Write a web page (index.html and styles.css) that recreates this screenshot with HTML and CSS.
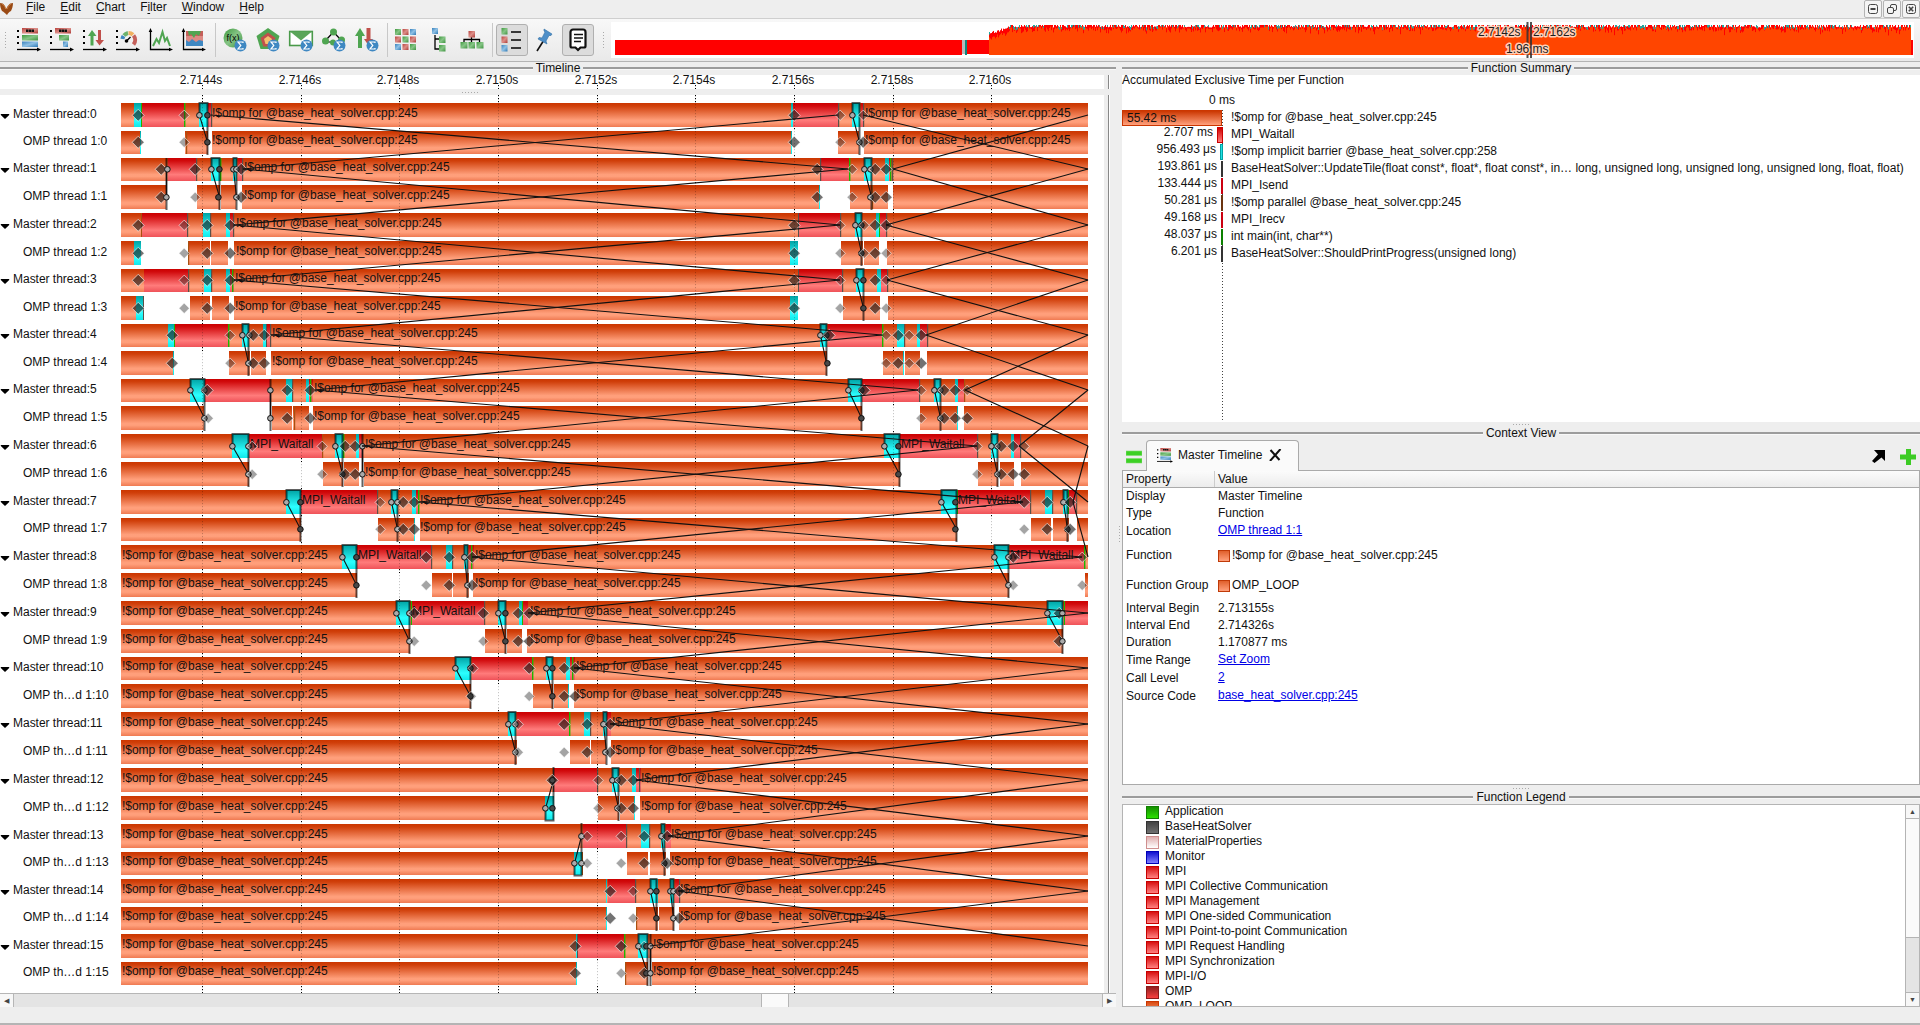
FILE: index.html
```html
<!DOCTYPE html>
<html lang="en">
<head>
<meta charset="utf-8">
<title>Trace View</title>
<link rel="stylesheet" href="styles.css">
</head>
<body>
<svg class="defs" width="0" height="0" aria-hidden="true">
  <defs>
    <linearGradient id="gOrange" x1="0" y1="0" x2="0" y2="1"><stop offset="0" stop-color="#cb3600"/><stop offset=".12" stop-color="#d03f0a"/><stop offset=".72" stop-color="#ff9f7b"/><stop offset=".8" stop-color="#ff9f7b"/><stop offset="1" stop-color="#ef7a52"/></linearGradient>
    <linearGradient id="gRed" x1="0" y1="0" x2="0" y2="1"><stop offset="0" stop-color="#cb0000"/><stop offset=".12" stop-color="#d10a0c"/><stop offset=".72" stop-color="#ff7b7b"/><stop offset="1" stop-color="#ef5258"/></linearGradient>
    <linearGradient id="gCyan" x1="0" y1="0" x2="0" y2="1"><stop offset="0" stop-color="#00a2a4"/><stop offset=".7" stop-color="#2cffff"/><stop offset="1" stop-color="#10e8ea"/></linearGradient>
    <linearGradient id="iG" x1="0" y1="0" x2="1" y2="1"><stop offset="0" stop-color="#3f9a3f"/><stop offset=".5" stop-color="#86c486"/><stop offset="1" stop-color="#3f9440"/></linearGradient>
    <linearGradient id="iR" x1="0" y1="0" x2="1" y2="1"><stop offset="0" stop-color="#b9433e"/><stop offset=".5" stop-color="#dc8f89"/><stop offset="1" stop-color="#ad3a35"/></linearGradient>
    <linearGradient id="iB" x1="0" y1="0" x2="1" y2="1"><stop offset="0" stop-color="#3a83bd"/><stop offset=".5" stop-color="#8fc0e4"/><stop offset="1" stop-color="#2f7ab5"/></linearGradient>
    <g id="axis"><path d="M0 2h2v2H0zM0 8h2v2H0zM0 14h2v2H0z" fill="#000"/><path d="M0 21.5h21" stroke="#000" stroke-width="1.3"/><path d="M20 19.5l4 2-4 2z"/></g>
    <g id="corner"><path d="M1.5 3v18.5H21" stroke="#000" stroke-width="1.3" fill="none"/><path d="M-.3 4l1.8-4 1.8 4zM20 19.7l4 1.8-4 1.8z"/></g>
    <g id="sigma"><circle cx="17.5" cy="17.5" r="6" fill="#3f88c2"/><path d="M20 15v-1h-5l2.8 3.4L15 21h5v-1" fill="none" stroke="#fff" stroke-width="1.2"/></g>
    <g id="masterIcon"><use href="#axis"/><rect x="5" y="0" width="16" height="5.5" fill="url(#iR)"/><path d="M9 2.8h8" stroke="#111" stroke-width="2.6" stroke-dasharray="2.400 .4"/><rect x="5" y="7" width="16" height="5.5" fill="url(#iG)"/><rect x="5" y="13.5" width="16" height="5.5" fill="url(#iB)"/></g>
  </defs>
</svg>

<div class="app">
  <header class="menubar">
    <svg class="logo" width="18" height="17" viewBox="0 0 18 17"><path d="M0 3c4 0 5 3 6 6 2-3 3-6 7-6 0 3-1 6-2 8-2 1-3 2-4 4-2-2-3-3-5-4C1 9 0 7 0 3z" fill="#9a4a14"/><path d="M2 4c3 1 3 4 4 5M11 4c-3 1-3 4-4 5" stroke="#c98046" fill="none"/></svg>
    <nav class="menus">
      <span class="menu"><u>F</u>ile</span><span class="menu"><u>E</u>dit</span><span class="menu"><u>C</u>hart</span><span class="menu">F<u>i</u>lter</span><span class="menu"><u>W</u>indow</span><span class="menu"><u>H</u>elp</span>
    </nav>
    <div class="winbtns">
      <span class="winbtn"><svg width="12" height="12" viewBox="0 0 12 12"><rect x="1.5" y="1.5" width="9" height="9" rx="2"/><path d="M3.5 6h5" stroke-width="2"/></svg></span>
      <span class="winbtn"><svg width="12" height="12" viewBox="0 0 12 12"><rect x="4.5" y="1.5" width="6" height="6" rx="1.5"/><rect x="1.5" y="4.5" width="6" height="6" rx="1.5" fill="#f4f4f4"/></svg></span>
      <span class="winbtn"><svg width="12" height="12" viewBox="0 0 12 12"><rect x="1.5" y="1.5" width="9" height="9" rx="2"/><path d="M3.8 3.8l4.4 4.4M8.2 3.8L3.8 8.2" stroke-width="1.6"/></svg></span>
    </div>
  </header>

  <div class="toolbar">
    <span class="grip"></span>
    <span class="tool"><svg viewBox="0 0 24 24"><use href="#masterIcon"/></svg></span>
    <span class="tool"><svg viewBox="0 0 24 24"><use href="#axis"/><rect x="5" width="16" height="5.5" fill="url(#iR)"/><path d="M9 2.8h8" stroke="#111" stroke-width="2.6" stroke-dasharray="2.400 .4"/><rect x="9" y="7" width="10" height="5.5" fill="url(#iG)"/><rect x="13" y="13.5" width="5" height="5.5" fill="url(#iB)"/></svg></span>
    <span class="tool"><svg viewBox="0 0 24 24"><use href="#axis"/><path d="M9 2l4.500 6H10.500v9.500h-3V8H5z" fill="#4fa551"/><path d="M16.500 17.500L12.500 12h2.500V2h3v10h3z" fill="#c0504b"/></svg></span>
    <span class="tool"><svg viewBox="0 0 24 24"><use href="#axis"/><g fill="none" stroke-width="4"><path d="M6.500 11a7 7 0 0 1 1-3" stroke="#3f88c2"/><path d="M8 7.500a7 7 0 0 1 4-2.500" stroke="#6db36d"/><path d="M12.500 5a7 7 0 0 1 4.500 1.800" stroke="#f0b060"/><path d="M17.500 7.500a7 7 0 0 1 0 9" stroke="#c4605a"/></g><circle cx="10.500" cy="13" r="1.800"/><path d="M10.500 13l4-4" stroke="#000" stroke-width="1.300"/></svg></span>
    <span class="tool"><svg viewBox="0 0 24 24"><use href="#corner"/><path d="M4 18l3.500-7 2.500 4 3.500-11 2.500 9 2-3 3 8" fill="none" stroke="#4fa551" stroke-width="2"/></svg></span>
    <span class="tool"><svg viewBox="0 0 24 24"><use href="#corner"/><rect x="4" y="3" width="17" height="5" fill="#c4605a"/><path d="M4 8h17v6H4z" fill="#dd8a84"/><path d="M6 3h13l-2 5-3-2-2 4-3-4-2 2z" fill="#4fa551"/><path d="M4 18v-6l3 2 3-3 4 3 3-2 4 1v5z" fill="#3f88c2"/></svg></span>
    <span class="sep first"></span>
    <span class="tool"><svg viewBox="0 0 24 24"><circle cx="10" cy="10" r="9.500" fill="url(#iG)"/><text x="10" y="13" class="fx">f(x)</text><use href="#sigma"/></svg></span>
    <span class="tool"><svg viewBox="0 0 24 24"><path d="M12 0l11.500 8-4 13h-15L.5 8z" fill="#4fa551"/><path d="M12 4.500l7.500 5.500-2.800 8.500H7.300L4.500 10z" fill="#c0504b"/><path d="M12 8l4 3-1.500 5h-5L8 11z" fill="#f4c070"/><use href="#sigma"/></svg></span>
    <span class="tool"><svg viewBox="0 0 24 24"><rect x=".7" y="3.500" width="22.600" height="14" fill="#fff" stroke="#4a9a4a" stroke-width="1.600"/><path d="M1 3.500h22l-11 9z" fill="#5aa55a"/><use href="#sigma"/></svg></span>
    <span class="tool"><svg viewBox="0 0 24 24"><path d="M11.500 4L4 12M11.500 4L19 12M4 14h5" stroke="#000" stroke-width="1.200"/><circle cx="11.500" cy="4" r="3.500" fill="#4fa551"/><circle cx="3.500" cy="13" r="3.500" fill="#4fa551"/><circle cx="11" cy="14.500" r="3" fill="#4fa551"/><circle cx="19.500" cy="12" r="3.500" fill="#4fa551"/><use href="#sigma"/></svg></span>
    <span class="tool"><svg viewBox="0 0 24 24"><path d="M5 0l5 8H7v12H3V8H0z" fill="#4fa551"/><path d="M14 18l-5-7h2.500V0h4v11H18z" fill="#c0504b"/><use href="#sigma"/></svg></span>
    <span class="sep second"></span>
    <span class="tool"><svg viewBox="0 0 24 24"><g fill="url(#iG)"><rect x="1" y="1" width="6" height="6"/><rect x="8.500" y="8.500" width="6" height="6"/><rect x="1" y="8.500" width="6" height="6" fill="url(#iR)"/><rect x="8.500" y="1" width="6" height="6" fill="url(#iR)"/><rect x="16" y="1" width="6" height="6" fill="url(#iB)"/><rect x="16" y="8.500" width="6" height="6" fill="url(#iR)"/><rect x="1" y="16" width="6" height="6" fill="url(#iB)"/><rect x="8.500" y="16" width="6" height="6" fill="url(#iR)"/><rect x="16" y="16" width="6" height="6"/></g></svg></span>
    <span class="tool"><svg viewBox="0 0 24 24"><path d="M8 7v14h5M8 11h5" fill="none" stroke="#000" stroke-width="1.300"/><rect x="5" width="6" height="6" fill="url(#iB)"/><rect x="12" y="8.500" width="6.500" height="6.500" fill="url(#iG)"/><rect x="12" y="17" width="6.500" height="6.500" fill="url(#iG)"/></svg></span>
    <span class="tool"><svg viewBox="0 0 24 24"><path d="M11.500 9v5M4 14v-2.500h15.500V14" fill="none" stroke="#000" stroke-width="1.300"/><rect x="8.500" y="3" width="6.500" height="6.500" fill="url(#iR)"/><rect x=".5" y="14" width="7" height="6.500" fill="url(#iG)"/><rect x="8.500" y="14" width="6.500" height="6.500" fill="url(#iG)"/><rect x="16.500" y="14" width="7" height="6.500" fill="url(#iG)"/></svg></span>
    <span class="sep third"></span>
    <span class="tool pressed"><svg viewBox="0 0 24 24"><rect x="1.500" width="6" height="6.500" fill="url(#iG)"/><rect x="1.500" y="8.500" width="6" height="6.500" fill="url(#iR)"/><rect x="1.500" y="17" width="6" height="6.500" fill="url(#iB)"/><path d="M11 4h10M11 12h10M11 20h10" stroke="#000" stroke-width="1.600"/></svg></span>
    <span class="tool pin"><svg viewBox="0 0 24 24"><path d="M11 12L4 23" stroke="#111" stroke-width="1.600"/><path d="M11 1l8 5-1 1.500h-2L13 13l1 3-9-5 1-1.500 3 .5 3-6-1-1z" fill="#4f8fc8" stroke="#2f6ea5" stroke-width=".6"/></svg></span>
    <span class="tool pressed"><svg viewBox="0 0 24 24"><path d="M7 1.500h10a2.500 2.500 0 0 1 2.500 2.500v14a1.500 1.500 0 0 1-1.500 1.500h-3.500L12 22l-2.500-2.500H6A1.500 1.500 0 0 1 4.500 18V4A2.500 2.500 0 0 1 7 1.500z" fill="#fff" stroke="#111" stroke-width="2.200"/><path d="M8 6.500h9M8 10h9M8 13.500h7" stroke="#111" stroke-width="1.500"/></svg></span>
    <span class="grip tail"></span>
    <svg class="overview" id="overview" width="1303" height="36" viewBox="611 23 1303 36"></svg>
  </div>

  <main class="workspace">
    <section class="timeline">
      <h2 class="group-title">Timeline</h2>
      <div class="ruler-row"><svg class="ruler" id="ruler" width="1104" height="14" viewBox="0 75 1104 14"></svg><i class="edge"></i></div>
      <div class="mini-splitter"><i class="dots"></i></div>
      <div class="chart-row"><svg class="chart" id="chart" width="1104" height="898" viewBox="0 95 1104 898"></svg><i class="edge"></i></div>
      <div class="hscroll"><span class="sbtn left">◀</span><span class="track"><i class="thumb"></i></span><span class="sbtn right">▶</span></div>
    </section>
    <div class="vsplit"><i class="vdots"></i></div>
    <aside class="side">
      <section class="summary">
        <h2 class="group-title">Function Summary</h2>
        <div class="summary-body">
          <p class="caption">Accumulated Exclusive Time per Function</p>
          <p class="zero">0 ms</p>
          <div class="bars" id="bars"></div>
        </div>
      </section>
      <div class="hsplit"><i class="dots"></i></div>
      <section class="context">
        <h2 class="group-title">Context View</h2>
        <div class="tabs">
          <svg class="eq" width="16" height="14" viewBox="0 0 16 14"><path d="M0 1h16v4.500H0zM0 8.500h16V13H0z" fill="#3cd024" stroke="#7fdc70" stroke-width=".6"/></svg>
          <div class="tab"><svg width="16" height="15" viewBox="0 0 24 24" preserveAspectRatio="none"><use href="#masterIcon"/></svg><span>Master Timeline</span><svg class="close" width="13" height="12" viewBox="0 0 13 12"><path d="M1.500 1l9 10M11.500 0L1 12" stroke="#111" stroke-width="2"/></svg></div>
          <svg class="arrow" width="15" height="14" viewBox="0 0 15 14"><path d="M3 0h11v11l-3.500-3.500L3.500 13 1 11l6-6.500z"/></svg>
          <svg class="plus" width="16" height="16" viewBox="0 0 16 16"><path d="M6 0h5v5.500h5v5h-5V16H6v-5.500H0v-5h6z" fill="#3ccb24"/></svg>
        </div>
        <div class="props">
          <div class="prow phead"><span>Property</span><span>Value</span></div>
          <div class="prow"><span>Display</span><span>Master Timeline</span></div>
          <div class="prow"><span>Type</span><span>Function</span></div>
          <div class="prow mid"><span>Location</span><a>OMP thread 1:1</a></div>
          <div class="prow tall"><span>Function</span><span class="sw"><i></i>!$omp for @base_heat_solver.cpp:245</span></div>
          <div class="prow tall"><span>Function Group</span><span class="sw"><i></i>OMP_LOOP</span></div>
          <div class="prow"><span>Interval Begin</span><span>2.713155s</span></div>
          <div class="prow"><span>Interval End</span><span>2.714326s</span></div>
          <div class="prow"><span>Duration</span><span>1.170877 ms</span></div>
          <div class="prow mid"><span>Time Range</span><a>Set Zoom</a></div>
          <div class="prow mid"><span>Call Level</span><a>2</a></div>
          <div class="prow mid"><span>Source Code</span><a>base_heat_solver.cpp:245</a></div>
        </div>
      </section>
      <div class="hsplit low"><i class="dots"></i></div>
      <section class="legend">
        <h2 class="group-title">Function Legend</h2>
        <div class="legend-box">
          <ul class="legend-list">
            <li><i class="green"></i>Application</li>
            <li><i class="grey"></i>BaseHeatSolver</li>
            <li><i class="pink"></i>MaterialProperties</li>
            <li><i class="blue"></i>Monitor</li>
            <li><i class="red"></i>MPI</li>
            <li><i class="red"></i>MPI Collective Communication</li>
            <li><i class="red"></i>MPI Management</li>
            <li><i class="red"></i>MPI One-sided Communication</li>
            <li><i class="red"></i>MPI Point-to-point Communication</li>
            <li><i class="red"></i>MPI Request Handling</li>
            <li><i class="red"></i>MPI Synchronization</li>
            <li><i class="red"></i>MPI-I/O</li>
            <li><i class="omp"></i>OMP</li>
            <li><i class="loop"></i>OMP_LOOP</li>
          </ul>
          <div class="vscroll"><span class="sbtn up">▲</span><span class="vthumb"></span><span class="vtrack"></span><span class="sbtn down">▼</span></div>
        </div>
      </section>
    </aside>
  </main>
  <footer class="status"></footer>
</div>
<script src="script.js"></script>
</body>
</html>
```
FILE: styles.css
```css
* { box-sizing: border-box; }
body { margin: 0; background: #eee; color: #111; font: 12px/14px "Liberation Sans", Arial, sans-serif; letter-spacing: -0.02px; overflow: hidden; }
.defs { position: absolute; }
.app { width: 1920px; height: 1025px; display: flex; flex-direction: column; background: #eee; }
i { font-style: normal; }

.menubar { height: 19px; display: flex; border-bottom: 1px solid #cfcfcf; flex: none; }
.menus { display: flex; gap: 15px; margin-left: 8px; flex: 1; }
.menu { height: 16px; line-height: 14px; }
.menu u { text-underline-offset: 2px; }
.winbtns { display: flex; gap: 1px; }
.winbtn { width: 18px; height: 18px; border: 1px solid #b4b4b4; border-radius: 2px; background: #f4f4f4; display: flex; align-items: center; justify-content: center; }
.winbtn svg { fill: none; stroke: #444; }

.toolbar { height: 43px; display: flex; align-items: center; background: linear-gradient(#f8f8f8, #e9e9e9); border-bottom: 1px solid #b4b4b4; flex: none; }
.grip { width: 4px; height: 18px; margin-left: 4px; margin-right: 4.5px; background: radial-gradient(circle, #aaa 0.7px, transparent 1px) 0 0 / 3px 3px; }
.grip.tail { margin-left: 8px; margin-right: 5px; }
.tool { width: 33px; height: 32px; display: flex; align-items: center; justify-content: center; flex: none; }
.tool svg { width: 24px; height: 24px; overflow: visible; }
.tool.pressed { width: 32px; background: #dcdcdc; border: 1px solid #b0b0b0; border-radius: 3px; }
.tool.pin { width: 34px; }
.sep { height: 34px; border-left: 1px solid #c8c8c8; flex: none; }
.sep.first { width: 4px; margin-left: 4px; }
.sep.second { width: 3px; margin-left: 3px; }
.sep.third { width: 4px; margin-left: 3.5px; }
.overview { background: #fff; flex: none; }

.workspace { display: flex; height: 945px; flex: none; }
.timeline { width: 1116px; display: flex; flex-direction: column; }
.group-title { margin: 0; font: inherit; display: flex; align-items: center; gap: 3px; height: 13px; line-height: 13px; }
.group-title::before, .group-title::after { content: ""; flex: 1; height: 2px; background: #9c9c9c; border-bottom: 1px solid #f8f8f8; }
.ruler-row, .chart-row { display: flex; gap: 4px; }
.ruler, .chart { background: #fff; display: block; flex: none; }
.ruler { overflow: visible; }
.edge { width: 2px; border-left: 1px solid #888; border-right: 1px solid #fff; }
.mini-splitter { height: 6px; display: flex; justify-content: center; align-items: center; padding-right: 176px; }
.dots { width: 16px; height: 1px; background: repeating-linear-gradient(90deg, #aaa 0 1px, transparent 1px 3px); }
.hscroll { height: 14px; display: flex; border-top: 1px solid #b6b6b6; }
.sbtn { font-size: 7px; line-height: 13px; color: #444; background: #f7f7f7; display: block; text-align: center; flex: none; }
.hscroll .sbtn { width: 14px; }
.sbtn.left { border-right: 1px solid #b6b6b6; }
.sbtn.right { border-left: 1px solid #b6b6b6; }
.track { flex: 1; background: #e4e4e4; display: flex; padding-left: 747px; }
.thumb { width: 28px; background: #fafafa; border: solid #b6b6b6; border-width: 0 1px; }

.vsplit { width: 6px; display: flex; align-items: center; justify-content: flex-end; padding-right: 2px; flex: none; }
.vdots { width: 1px; height: 17px; background: repeating-linear-gradient(#aaa 0 1px, transparent 1px 3px); }
.side { width: 798px; display: flex; flex-direction: column; }

.summary-body { background: #fff; height: 347px; display: flex; flex-direction: column; }
.caption { margin: -2px 0 0; height: 20px; line-height: 14px; }
.zero { margin: 0; height: 17px; width: 200px; text-align: center; line-height: 14px; }
.bars { flex: 1; display: flex; flex-direction: column; background: repeating-linear-gradient(#444 0 1px, transparent 1px 3px) 100px 0 / 1px 100% no-repeat; }
.bar-row { height: 17px; display: flex; flex: none; }
.bar-left { width: 101px; display: flex; justify-content: flex-end; gap: 4px; line-height: 11px; white-space: nowrap; }
.bar { height: 16px; flex: none; }
.bar-name { margin-left: 8px; line-height: 15px; white-space: nowrap; }
.bar.wide { width: 100px; margin-right: 1px; border: 1px solid #cb3600; background: linear-gradient(#cb3600, #ffa07c); padding-left: 4px; line-height: 14px; }

.hsplit { height: 5px; display: flex; justify-content: center; align-items: center; flex: none; }
.context { display: flex; flex-direction: column; }
.tabs { height: 30px; display: flex; align-items: center; padding-left: 4px; }
.eq { margin-top: 4px; }
.tab { height: 31px; width: 153px; margin-left: 4px; background: #fafafa; border: 1px solid #aaa; border-bottom: 0; border-radius: 4px 4px 0 0; display: flex; align-items: center; padding: 0 0 2px 10px; gap: 5px; margin-bottom: -1px; z-index: 1; }
.close { margin-left: 2px; }
.arrow { margin-left: auto; margin-top: 4px; }
.plus { margin-left: 14px; margin-right: 4px; margin-top: 4px; }
.props { height: 315px; background: #fff; border: 1px solid #aaa; }
.prow { display: flex; height: 17px; line-height: 17px; padding-left: 3px; }
.prow > :first-child { width: 92px; flex: none; }
.prow.mid { height: 18px; line-height: 18px; }
.prow.mid a { line-height: 17px; color: #0000e6; text-decoration: underline; }
.prow.tall { height: 30px; line-height: 30px; }
.phead { background: linear-gradient(#fbfbfb, #ececec); border-bottom: 1px solid #aaa; }
.phead > :first-child { width: 89px; border-right: 1px solid #ccc; margin-right: 3px; }
.sw { display: flex; align-items: center; gap: 2px; }
.sw i { width: 12px; height: 12px; border: 1px solid #c03a08; background: linear-gradient(#e0602c, #ffa07c); margin-top: 2px; }

.hsplit.low { height: 6px; }
.legend { display: flex; flex-direction: column; }
.legend-box { height: 203px; border: 1px solid #b4b4b4; background: #fff; display: flex; overflow: hidden; }
.legend-list { list-style: none; margin: 0; padding: 0 0 0 23px; flex: 1; }
.legend-list li { height: 15px; line-height: 13px; display: flex; gap: 6px; }
.legend-list i { width: 13px; height: 13px; border: 1px solid; margin-top: 1px; flex: none; }
.legend-list .green { border-color: #108000; background: linear-gradient(#159000, #2be000); }
.legend-list .grey { border-color: #333; background: linear-gradient(#444, #707070); }
.legend-list .pink { border-color: #cf8f8f; background: linear-gradient(#e0b0b0, #fff); }
.legend-list .blue { border-color: #0000b8; background: linear-gradient(#1010d0, #8080ff); }
.legend-list .red { border-color: #c80000; background: linear-gradient(#d81010, #ff8080); }
.legend-list .omp { border-color: #8b1a1a; background: linear-gradient(#922020, #f84040); }
.legend-list .loop { border-color: #cb3600; background: linear-gradient(#d84a10, #ffa07c); }
.vscroll { width: 14px; border-left: 1px solid #b4b4b4; display: flex; flex-direction: column; background: #e4e4e4; }
.sbtn.up { height: 14px; border-bottom: 1px solid #b4b4b4; }
.vthumb { height: 119px; background: #fafafa; border-bottom: 1px solid #b4b4b4; }
.vtrack { flex: 1; }
.sbtn.down { height: 14px; border-top: 1px solid #b4b4b4; }
.status { flex: 1; border-bottom: 2px solid #b4b4b4; }

svg text { font-family: "Liberation Sans", Arial, sans-serif; font-size: 12px; fill: #111; }
svg text.fx { font-size: 9px; text-anchor: middle; fill: #000; }
svg text.mark { stroke: #ffd0b8; stroke-width: 3px; paint-order: stroke; stroke-linejoin: round; fill: #1c1c1c; }
```
FILE: script.js
```js
// Pixel rows of the process/thread lanes.
const TOPS = [103,131,158,185,213,241,269,296,324,351,379,406,434,462,490,518,545,573,601,629,657,684,712,740,768,796,824,852,879,907,934,962];
const HEIGHTS = [24,23,23,24,24,24,23,24,23,24,23,24,24,24,24,23,24,24,24,24,23,24,24,24,24,24,24,23,24,23,24,23];
const LEFT = 121, RIGHT = 1088;

// Spans: c barrier, r MPI, w idle, g/k/b one pixel ticks, m sync region (u when it starts on the worker).
// Marks: D/d burst markers, o/O sync points, T loop label, W wait label.
const LANES = [
 ["c134-140 g141 r142-184 g184 m199-207 r208-211 k211 c791-792 k793 r793-837 k838 m852-859 r861-863 k863 D138 d184 o199 O207 D794 d840 o852 d863 T213 T866",
  "c140 w141-185 b186 w208-212 c791 w792-838 w859-864 D138 d184 O207 D794 d840 o859 D863 T213 T866"],
 ["m166-166 r168-195 k196 m211-219 g220 m233-236 r238-241 k242 r820-848 k820 g849 m864-871 c885-888 r889-892 g890 k892 D161 o167 D195 o211 O219 o233 o236 D241 D817 d852 o864 o870 D875 D886 T245",
  "w166-197 w220-221 w236-242 c819 w820-850 b872 w888-893 D161 o166 d195 O218 o236 D241 D817 d852 o870 D875 D886 T245"],
 ["b141 r142-187 k187 c203-209 k210 c226-229 r230-233 k233 k798 r799-840 k840 m855-861 c876-879 g879 r880-886 k886 D138 d184 D207 D230 D794 d840 o855 O861 d864 D875 D886 T237",
  "c134-141 w141-188 b188 w210-211 w228-234 c790-797 w798-841 w863-864 w879-887 D138 d184 D207 D230 D794 d840 O861 d864 D875 d886 T237"],
 ["r144-188 k188 c204-210 k211 c226-229 r230-233 g232 k798 r799-841 k842 m856-863 c877-880 r881-887 k887 D138 d184 D207 D230 D794 d840 o856 O863 D875 d886 T236",
  "c136-143 k143 w144-190 w210-212 w229-234 c790-798 w798-843 w880-888 D138 d184 D207 D230 D794 d840 O863 D875 d886 T236"],
 ["c168-173 g174 r175-228 g228 m242-248 c263-266 k266 r267-270 k270 m820-826 r828-881 g882 c897-904 k904 c917-920 r920-927 k927 D172 d230 o242 o249 D253 D264 o820 O826 D829 d886 D898 d909 D921 T273",
  "c173 w174-229 w250-251 w266-271 w827-883 c903 w904-905 w920-927 D172 d230 o248 D253 D264 O827 d886 D898 d909 D921 T273"],
 ["m190-204 r205-269 m270-270 c286-292 k292 c306-308 r309-312 g310 m848-861 r862-919 k919 m934-940 c955-958 r958-964 b964 o190 o204 D207 o270 D287 D310 o848 O861 D864 d921 o934 o940 D944 D955 d967 T315",
  "w204-272 w292-293 b294 w309-313 w862-920 c957 w958-964 o204 d208 o270 D287 D310 O861 d921 o940 D944 D955 D967 T315"],
 ["m232-248 r249-321 b322 m335-342 g343 c356-359 r359-361 m362-362 m884-899 r900-976 k977 m991-997 c1011-1014 r1014-1020 k1020 o232 o248 d252 d322 o335 D345 D355 o362 o884 O898 d977 o991 o997 D1001 D1013 d1024 W251 W902 T366",
  "w249-323 w343-344 w359-364 w900-978 w998-1000 w1014-1021 o248 d252 d322 O342 D345 D355 o362 O898 d977 o997 D1001 D1013 D1024 T366"],
 ["m286-300 r301-377 k377 m391-397 c412-415 r416-418 g418 m941-956 g957 r958-1030 k1030 c1045-1051 k1052 m1063-1067 g1068 r1069-1076 k1076 o286 O300 d380 o391 o397 D403 D414 o941 O955 D1024 D1047 o1063 D1070 W303 W959 T421",
  "w301-378 c414 w415-420 w957-1031 w1051-1053 w1069-1077 O300 d380 o397 D403 D414 O955 d1024 D1047 O1067 D1070 T421"],
 ["m342-356 r357-430 k431 c446-452 k452 m464-467 r469-473 g471 m994-1008 r1010-1083 g1084 o342 O356 D426 D449 o464 D472 o994 o1008 D1013 d1082 T123 W359 W1011 T476",
  "w357-432 w452-453 w469-473 w1009-1085 O356 d426 D449 o467 D472 o1008 d1013 d1082 T123 T476"],
 ["m396-409 g411 r412-484 k484 m498-505 c519-522 g522 r523-527 m1047-1062 g1064 r1065-1087 o396 o409 D414 D483 o498 O505 D518 D529 o1047 D1059 o1062 T123 W413 T531",
  "w410-485 w506-507 w522-527 w1063-1088 o409 d414 d483 O505 D518 D529 D1059 o1062 T123 T531"],
 ["m455-470 r472-531 g532 m546-552 c566-569 r570-574 g572 o455 O470 d473 D529 o546 O552 D564 D575 T123 T577",
  "w471-533 w553-554 c568 w569-574 O470 d471 d529 O552 D564 D575 T123 T577"],
 ["m508-515 r517-568 g569 c584-590 k590 m603-606 r607-610 o508 o515 d518 D564 D587 o603 D610 T123 T613",
  "w517-570 w590-591 w606-611 o515 d518 d564 D587 o605 D610 T123 T613"],
 ["k553 r554-597 k597 m612-618 c632-635 r636-640 k639 D552 O552 d598 o612 o617 D621 D633 T123 T642",
  "u545-553 w554-598 w619-620 c634 w635-640 o545 O552 d598 o617 D621 D633 T123 T642"],
 ["r583-626 k626 c641-648 k649 m661-664 r666-670 o581 d587 d621 D644 o661 D667 T123 T672",
  "u574-581 b582 w583-627 w648-650 w666-670 o574 o581 d587 d621 D644 O664 D667 T123 T672"],
 ["c606 r608-635 k635 m650-656 c657 m670-673 r675-679 k679 D610 d633 o650 O656 o670 o673 D679 T123 T681",
  "c606 w607-636 b636 w658-659 w674-679 D610 d633 O656 o673 D679 T123 T681"],
 ["c576 k577 r578-623 g624 m638-647 m650-650 D575 D621 o638 d644 O646 o650 T123 T654",
  "c576 w577-625 b625 w648-652 D575 d621 D644 O646 o650 T123 T654"]
];

// Message start/end columns of the two halo exchanges, per rank.
const S1 = [211,243,234,234,271,315,362,419,472,528,574,610,636,668,678,650];
const E1 = [838,848,840,840,882,918,977,1023,1082,1088,1088,1088,1088,1088,1088,1088];
const S2 = [863,893,886,887,926,965,1019,1073];

const LOOP = "!$omp for @base_heat_solver.cpp:245";
const rect = (x, y, w, h, f) => `<rect x="${x}" y="${y}" width="${w}" height="${h}" fill="${f}"/>`;
const line = (x1, y1, x2, y2) => `<line x1="${x1}" y1="${y1}" x2="${x2}" y2="${y2}" stroke="#111" stroke-width="1.1"/>`;
const mid = i => TOPS[i] + Math.floor(HEIGHTS[i] / 2);

let base = "", texts = "", overlay = "", marks = "", labels = "";
const TICKS = [202,301,399,498,597,695,794,893,991];
const grid = a => TICKS.map(x => `<line x1="${x + .5}" y1="95" x2="${x + .5}" y2="993" stroke="#000" stroke-opacity="${a}" stroke-dasharray="1.2 1.8"/>`).join("");
base += grid(1);

LANES.forEach((pair, p) => pair.forEach((src, k) => {
  const i = p * 2 + k, y = TOPS[i], h = HEIGHTS[i], m = mid(i), c = m + .3;
  base += rect(LEFT, y, RIGHT - LEFT, h, "url(#gOrange)");
  let whites = "";
  src.split(" ").forEach(t => {
    const kind = t[0], [a, b] = t.slice(1).split("-").map(Number), w = (b || a) - a + (kind === "w" ? 0 : 1);
    if (kind === "w") whites += rect(a, y, w, h, "#fff");
    else if (kind === "c") base += rect(a, y, w, h, "url(#gCyan)");
    else if (kind === "r") base += rect(a, y, w, h, "url(#gRed)");
    else if (kind === "g") base += rect(a, y, 1.4, h, "#1eb400");
    else if (kind === "k") base += rect(a, y, 1.2, h, "#5a5048");
    else if (kind === "b") base += rect(a, y, 1.2, h, "#a85010");
    else if (kind === "m") {
      const y2 = TOPS[i + 1] + HEIGHTS[i + 1] + 1;
      if (b > a) base += rect(a, y, w, h, "url(#gCyan)");
      overlay += `<path d="M${a + .5} ${c}V${y}H${b + .5}V${y2}" fill="none" stroke="#000" stroke-opacity=".62" stroke-width="2"/>`;
      overlay += line(a + .5, c, b + .5, mid(i + 1));
    } else if (kind === "u") {
      base += rect(a, y, w, h, "url(#gCyan)");
      overlay += `<path d="M${a + .5} ${c}V${y + h + .5}H${b + .5}V${TOPS[i - 1] - 1}" fill="none" stroke="#000" stroke-opacity=".62" stroke-width="2"/>`;
      overlay += line(a + .5, c, b + .5, mid(i - 1));
    } else if (kind === "D" || kind === "d") {
      const r = kind === "D" ? 6 : 5.2, x = a + .2;
      marks += `<path d="M${x - r} ${c}l${r} ${-r}l${r} ${r}l${-r} ${r}z" fill="#1c1c1c" fill-opacity="${kind === "D" ? .62 : .4}" stroke="#fff" stroke-opacity=".6"/>`;
    } else if (kind === "o" || kind === "O")
      marks += `<circle cx="${a + .4}" cy="${c}" r="2.8" fill="${kind === "o" ? "#aaa" : "#484848"}" stroke="#111"/>`;
    else
      texts += `<text x="${a - 1}" y="${m + 2}">${kind === "T" ? LOOP : "MPI_Waitall"}</text>`;
  });
  base += whites;
  if (k) labels += `<text x="23" y="${m + 3}">${p < 10 ? "OMP thread 1:" + p : "OMP th…d 1:" + p}</text>`;
  else labels += `<path d="M.8 ${m - 1}h8.400v1L5 ${m + 4}L.8 ${m}z" fill="#000"/><text x="13" y="${m + 3}">Master thread:${p}</text>`;
}));

let messages = "";
const link = (i, x1, j, x2) => { messages += line(x1, mid(i * 2), x2, mid(j * 2)); };
for (let i = 0; i < 15; i++) { link(i, S1[i], i + 1, E1[i + 1]); link(i + 1, S1[i + 1], i, E1[i]); }
for (let i = 0; i < 8; i++) { link(i, S2[i], i + 1, RIGHT); if (i) link(i, S2[i], i - 1, RIGHT); }
document.getElementById("chart").innerHTML = base + grid(.22) + texts + labels + overlay + marks + messages;

document.getElementById("ruler").innerHTML = TICKS.map((x, n) =>
  `<text x="${x - 1}" y="84" text-anchor="middle">${(2.7144 + n * .0002).toFixed(4)}s</text><path d="M${x + .5} 85v4" stroke="#000" stroke-dasharray="1.2 1.8"/>`).join("");

// Whole-trace overview strip.
let seed = 7;
const rnd = () => (seed = (seed * 16807) % 2147483647) / 2147483647;
let ov = rect(615, 41, 347, 15, "#f00") + rect(962, 41, 3, 14, "#b8b8b8") + rect(965, 41, 2, 15, "#0a8a80") + rect(967, 41, 22, 14, "#f00");
for (let x = 989; x < 1911; x++) {
  const top = x < 1008 ? 34 - (x - 989) * .3 + rnd() * 3 - 1 : 26 + (rnd() < .45 ? 1 + rnd() * 1.5 : 0);
  const start = top + 1 + rnd() * rnd() * 7 + (x < 1010 ? 2 : 0);
  ov += rect(x, start, 1, 56 - start, "#ff4500") + rect(x, top, 1, start - top + .5, "#f00");
  if (rnd() < .3) ov += rect(x, top, 1, 1.5 + rnd() * 1.5, "#20a8a0");
}
ov += rect(1911, 41, 2, 15, "#f00");
ov += `<path d="M1527.500 23v36M1531 23v36" stroke="#333" stroke-opacity=".85" stroke-width="2"/><text class="mark" x="1478" y="36.500">2.7142s</text><text class="mark" x="1533" y="36.500">2.7162s</text><text class="mark" x="1506" y="54">1.96 ms</text>`;
document.getElementById("overview").innerHTML = ov;

const FUNCS = [
 ["55.42 ms", LOOP], ["2.707 ms", "MPI_Waitall", "linear-gradient(#d00000,#ff7b7b)", 6, "#cb0000"],
 ["956.493 μs", "!$omp implicit barrier @base_heat_solver.cpp:258", "#20e0e4", 3, "#00a2a4"],
 ["193.861 μs", "BaseHeatSolver::UpdateTile(float const*, float*, float const*, in… long, unsigned long, unsigned long, unsigned long, float, float)", "#333", 2],
 ["133.444 μs", "MPI_Isend", "#cb0010", 2], ["50.281 μs", "!$omp parallel @base_heat_solver.cpp:245", "#6b3410", 2],
 ["49.168 μs", "MPI_Irecv", "#cb0010", 2], ["48.037 μs", "int main(int, char**)", "#0c8000", 2],
 ["6.201 μs", "BaseHeatSolver::ShouldPrintProgress(unsigned long)", "#333", 2]
];
document.getElementById("bars").innerHTML = FUNCS.map(([v, n, bg, w, bd], i) => i === 0
  ? `<div class="bar-row"><div class="bar-left"><div class="bar wide">${v}</div></div><span class="bar-name">${n}</span></div>`
  : `<div class="bar-row"><div class="bar-left">${v}<i class="bar" style="width:${w}px;background:${bg};${bd ? "border:1px solid " + bd : ""}"></i></div><span class="bar-name">${n}</span></div>`).join("");
```
